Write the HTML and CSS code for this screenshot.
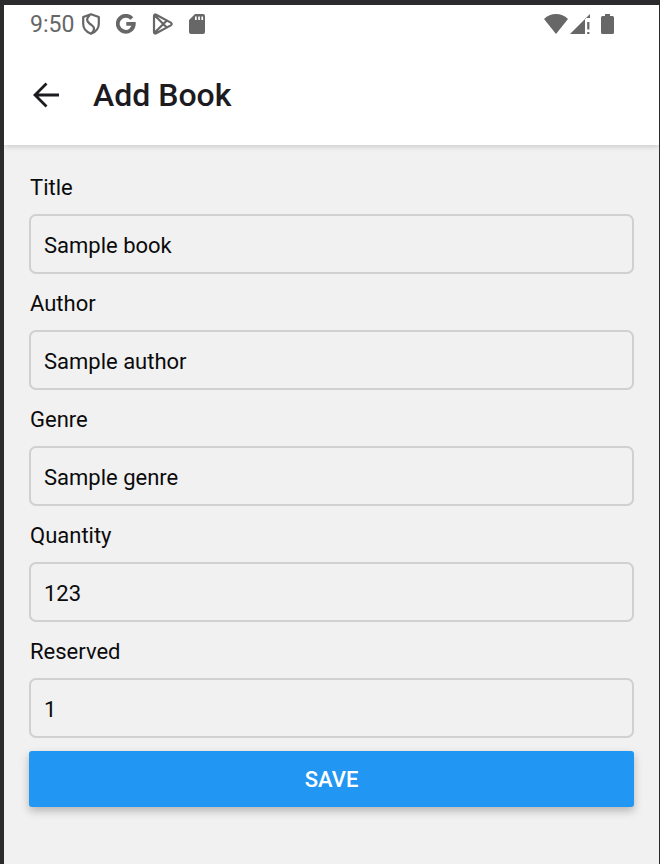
FILE: index.html
```html
<!DOCTYPE html>
<html lang="en">
<head>
  <meta charset="utf-8">
  <meta name="viewport" content="width=device-width, initial-scale=1">
  <title>Add Book</title>
  <link rel="stylesheet" href="styles.css">
</head>
<body>
  <div class="screen">
    <header class="top">
      <div class="status">
        <span class="clock">9:50</span>
        <svg class="status-icon shield" width="20" height="22" viewBox="0 0 20 22" fill="none" stroke="currentColor" stroke-width="2.200" stroke-linejoin="round">
          <path d="M10 1.200 17.800 4v7c0 4.300-3.300 8-7.800 9.800C5.500 19 2.200 15.300 2.200 11V4z"/>
          <path d="M9 2C5.300 5 5.200 8 8.500 10.500l2.500 1.800c3 2.200 2.500 5.200-.5 8"/>
        </svg>
        <svg class="status-icon google" width="20" height="20" viewBox="0 0 20 20" fill="none" stroke="currentColor" stroke-width="3.800">
          <path d="M15.900 4.600A8 8 0 1 0 17.800 9.900H10.300"/>
        </svg>
        <svg class="status-icon play" width="22" height="22" viewBox="0 0 22 22" fill="none" stroke="currentColor" stroke-width="2.200" stroke-linejoin="round" stroke-linecap="round">
          <path d="M2 3c0-1.300 1-2 2.200-1.300L18.800 9.600c1.200.7 1.200 2.100 0 2.800L4.200 20.300C3 21 2 20.300 2 19zM2.800 2.500 14.800 14.500M2.800 19.500 14.800 7.500"/>
        </svg>
        <svg class="status-icon card" width="16" height="20" viewBox="0 0 16 20">
          <path fill="currentColor" fill-rule="evenodd" d="M6 0h8a2 2 0 0 1 2 2v16a2 2 0 0 1-2 2H2a2 2 0 0 1-2-2V6zM6 2.500v3.500h1.700V2.500zM9.200 2.500v3.500h1.700V2.500zM12.400 2.500v3.500h1.700V2.500z"/>
        </svg>
        <span class="spacer"></span>
        <svg class="status-icon wifi" width="24" height="20" viewBox="0 0 24 20">
          <path fill="currentColor" d="M12 20 0 5C6.500-1.600 17.500-1.600 24 5z"/>
        </svg>
        <svg class="status-icon signal" width="20" height="20" viewBox="0 0 20 20">
          <path fill="currentColor" d="M0 20 20 0v4h-5v16zM17.200 8h2.200v7.500h-2.200zM17.200 18h2.200v2h-2.200z"/>
        </svg>
        <svg class="status-icon battery" width="13" height="20" viewBox="0 0 13 20">
          <path fill="currentColor" d="M4 0h5v2h2.500A1.500 1.500 0 0 1 13 3.500v15a1.500 1.500 0 0 1-1.500 1.500h-10A1.500 1.500 0 0 1 0 18.500v-15A1.500 1.500 0 0 1 1.500 2H4z"/>
        </svg>
      </div>
      <div class="app-bar">
        <button class="back" type="button" aria-label="Back">
          <svg width="26" height="26" viewBox="0 0 26 26" fill="none" stroke="currentColor" stroke-width="2.800">
            <path d="M26 13H2.500M13.500 1.500 2 13l11.500 11.500"/>
          </svg>
        </button>
        <h1 class="title">Add Book</h1>
      </div>
    </header>
    <main class="content">
      <form class="form">
        <label class="label" for="title">Title</label>
        <input class="input" id="title" type="text" value="Sample book">
        <label class="label" for="author">Author</label>
        <input class="input" id="author" type="text" value="Sample author">
        <label class="label" for="genre">Genre</label>
        <input class="input" id="genre" type="text" value="Sample genre">
        <label class="label" for="quantity">Quantity</label>
        <input class="input" id="quantity" type="text" inputmode="numeric" value="123">
        <label class="label" for="reserved">Reserved</label>
        <input class="input" id="reserved" type="text" inputmode="numeric" value="1">
        <button class="save" type="button">SAVE</button>
      </form>
    </main>
  </div>
</body>
</html>
```
FILE: styles.css
```css
* {
  box-sizing: border-box;
}

body {
  margin: 0;
  font-family: Roboto, "Liberation Sans", sans-serif;
  font-size: 22px;
  color: #0b0b0c;
}

.screen {
  min-height: 100vh;
  border: solid #2b2a2d;
  border-width: 5px 1px 0 4px;
  background: #f1f1f1;
}

.top {
  background: #fff;
  box-shadow: 0 1px 6px rgba(0, 0, 0, 0.2);
  clip-path: inset(0 0 -12px 0);
}

.status {
  display: flex;
  align-items: center;
  height: 38px;
  padding: 0 45px 0 26px;
  color: #676767;
}

.clock {
  margin-right: 7px;
  font-size: 23px;
}

.status-icon {
  flex: none;
}

.google {
  margin-left: 15px;
}

.play {
  margin-left: 16px;
}

.card {
  margin-left: 15px;
}

.spacer {
  flex: 1;
}

.signal {
  margin-left: 2px;
}

.battery {
  margin-left: 11px;
}

.app-bar {
  display: flex;
  align-items: center;
  height: 102px;
  padding: 2px 29px 0;
  color: #1c1b1f;
}

.back {
  display: flex;
  padding: 0;
  border: 0;
  background: none;
  color: inherit;
}

.title {
  margin: 0 0 0 34px;
  font-size: 32px;
  font-weight: 500;
  line-height: 40px;
}

.content {
  padding: 29px 25px;
}

.form {
  display: flex;
  flex-direction: column;
}

.label {
  margin-bottom: 12px;
  padding-left: 1px;
  line-height: 28px;
}

.input {
  width: 100%;
  height: 60px;
  margin-bottom: 16px;
  padding: 2px 13px 0;
  border: 2px solid #d0d0d0;
  border-radius: 7px;
  background: transparent;
  color: inherit;
  font: inherit;
}

.save {
  height: 56px;
  margin-top: -3px;
  border: 0;
  border-radius: 3px;
  background: #2196f3;
  box-shadow: 0 4px 9px rgba(0, 0, 0, 0.25);
  color: #fff;
  font: inherit;
  font-weight: 500;
}
```
